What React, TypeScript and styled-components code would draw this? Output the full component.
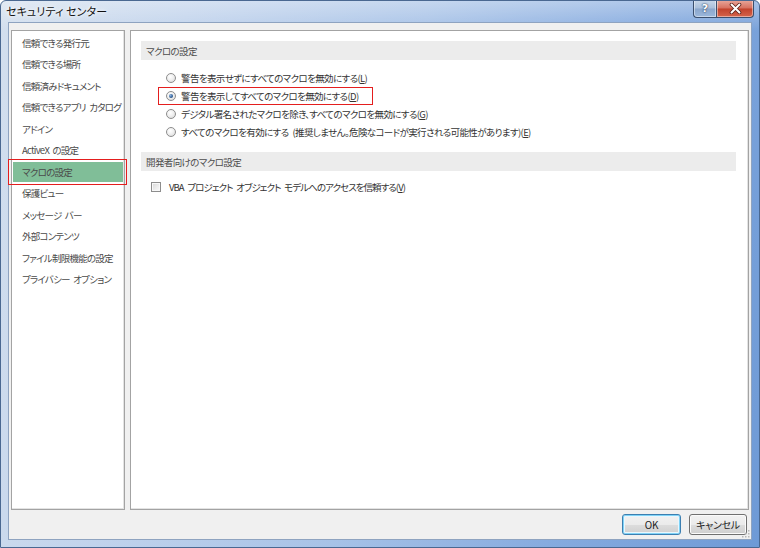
import React from "react";
import styled, { createGlobalStyle, css } from "styled-components";

const GlobalStyle = createGlobalStyle`
  html, body { margin: 0; padding: 0; overflow: hidden; background: #ffffff; }
  body {
    font-family: "Noto Sans CJK JP", "Noto Sans", sans-serif;
    font-feature-settings: "palt";
  }
  * { box-sizing: border-box; }
`;

const Window = styled.div`
  width: 760px;
  height: 548px;
  display: flex;
  flex-direction: column;
  background:
    linear-gradient(180deg, rgba(255,255,255,0.35) 0px, rgba(255,255,255,0) 30px),
    linear-gradient(100deg, #d3dfee 0%, #c1d3ec 22%, #a7c2e7 50%, #86abdf 75%, #6e9ad6 100%);
  border: 1px solid #4a6891;
  border-radius: 6px 6px 0 0;
  overflow: hidden;
`;

const TitleBar = styled.div`
  height: 21px;
  flex: none;
  display: flex;
  align-items: flex-start;
  padding: 0 5px 0 5px;
`;

const Title = styled.div`
  padding-top: 3px;
  font-size: 11px;
  line-height: 14px;
  color: #111;
  text-shadow: 0 0 6px #fff, 0 0 3px #fff;
  letter-spacing: 0.1px;
`;

const CaptionButtons = styled.div`
  margin-left: auto;
  display: flex;
  margin-top: -1px;
`;

const captionBase = css`
  height: 18px;
  display: flex;
  align-items: center;
  justify-content: center;
  border: 1px solid #3b4f6d;
  border-top: none;
  box-shadow: inset 0 0 0 1px rgba(255,255,255,0.45);
`;

const HelpButton = styled.div`
  ${captionBase};
  width: 23px;
  border-radius: 0 0 0 4px;
  border-right: none;
  background: linear-gradient(180deg, #c9d8ea 0%, #a9bfdb 48%, #8aa6cc 52%, #9cb8dc 100%);
  color: #fff;
  font-family: "DejaVu Sans", sans-serif;
  font-weight: bold;
  font-size: 11px;
  text-shadow: 0 0 2px #2c3f5c, 0 0 1px #2c3f5c;
`;

const CloseButton = styled.div`
  ${captionBase};
  width: 38px;
  border-radius: 0 0 4px 0;
  background: linear-gradient(180deg, #e9a99d 0%, #d7705f 48%, #c2422c 52%, #d4644b 100%);
`;

const Client = styled.div`
  flex: 1;
  margin: 0 7px 7px 7px;
  position: relative;
  background: #f0f0f0;
  border: 1px solid #8ea3c0;
  display: grid;
  grid-template-rows: 480px auto;
  padding: 7px 2px 0 2px;
`;

const Panels = styled.div`
  display: grid;
  grid-template-columns: 114px 1fr;
  column-gap: 5px;
`;

const Panel = styled.div`
  background: #fff;
  border: 1px solid #a3a3a3;
  box-shadow: inset -1px -1px 0 #e3e3e3;
  position: relative;
`;

const NavList = styled.div`
  display: flex;
  flex-direction: column;
  padding-top: 1.75px;
`;

const NavItem = styled.div<{ $selected?: boolean }>`
  position: relative;
  height: 20px;
  margin: 0 1px 1.5px 1px;
  padding-left: 9px;
  display: flex;
  align-items: center;
  font-size: 9.5px;
  letter-spacing: -0.75px;
  word-spacing: 2px;
  color: #4a4a4a;
  white-space: pre;
  background: ${(p) => (p.$selected ? "#80be98" : "transparent")};
`;

const Annotation = styled.div`
  position: absolute;
  border: 1px solid #e41e1e;
  pointer-events: none;
`;

const NavMark = styled(Annotation)`
  left: -5px;
  right: -4px;
  top: -3px;
  bottom: -3px;
`;

const OptionMark = styled(Annotation)`
  left: -8px;
  width: 215px;
  top: 0;
  bottom: 0;
`;

const SectionHeader = styled.div<{ $top: number }>`
  margin: ${(p) => p.$top}px 12px 0 10px;
  height: 19px;
  background: #ececec;
  display: flex;
  align-items: center;
  padding-left: 5px;
  font-size: 9.5px;
  letter-spacing: -0.6px;
  color: #4d4d4d;
`;

const OptionList = styled.div`
  margin-top: 9px;
  padding-left: 35px;
  display: flex;
  flex-direction: column;
`;

const OptionRow = styled.label<{ $tight?: boolean }>`
  position: relative;
  height: 18px;
  display: flex;
  align-items: center;
  font-size: 9.5px;
  letter-spacing: ${(p) => (p.$tight ? "-0.95px" : "-0.62px")};
  word-spacing: 2.5px;
  color: #333;
  white-space: pre;
`;

const Radio = styled.span<{ $checked?: boolean }>`
  width: 10px;
  height: 10px;
  flex: none;
  border-radius: 50%;
  border: 1px solid #8d8d8d;
  background: radial-gradient(circle at 40% 35%, #ffffff 0%, #f0f0f0 45%, #d4d4d4 100%);
  margin-right: 5px;
  display: flex;
  align-items: center;
  justify-content: center;
  &::after {
    content: "";
    display: ${(p) => (p.$checked ? "block" : "none")};
    width: 4px;
    height: 4px;
    border-radius: 50%;
    background: radial-gradient(circle at 35% 35%, #8fb6e0 0%, #2f5d95 60%, #1b3c66 100%);
  }
`;

const CheckRow = styled(OptionRow)`
  margin-top: 7px;
  padding-left: 20px;
`;

const CheckBox = styled.span`
  width: 10px;
  height: 10px;
  flex: none;
  border: 1px solid #8d8d8d;
  background: linear-gradient(135deg, #d6d6d6 0%, #eeeeee 60%, #fafafa 100%);
  box-shadow: inset 0 0 0 1px #f8f8f8;
  margin-right: 8px;
`;

const Footer = styled.div`
  display: flex;
  justify-content: flex-end;
  gap: 8px;
  padding: 4px 2px 0 0;
`;

const Button = styled.button<{ $default?: boolean; $w: number }>`
  width: ${(p) => p.$w}px;
  height: 21px;
  padding: 0;
  font-family: "Noto Sans CJK JP", "Noto Sans", sans-serif;
  font-feature-settings: "palt";
  font-size: 10px;
  letter-spacing: -0.3px;
  color: #222;
  border-radius: 3px;
  border: 1px solid ${(p) => (p.$default ? "#3c7fb1" : "#707070")};
  background: linear-gradient(180deg, #f2f2f2 0%, #ebebeb 50%, #dddddd 51%, #cfcfcf 100%);
  box-shadow: ${(p) =>
    p.$default
      ? "inset 0 0 0 1px #7fd3f7, inset 0 0 0 2px #e9f6fd"
      : "inset 0 0 0 1px #fbfbfb"};
`;

const Grip = styled.svg`
  position: absolute;
  right: 1px;
  bottom: 1px;
`;

const navItems = [
  "信頼できる発行元",
  "信頼できる場所",
  "信頼済みドキュメント",
  "信頼できるアプリ カタログ",
  "アドイン",
  "ActiveX の設定",
  "マクロの設定",
  "保護ビュー",
  "メッセージ バー",
  "外部コンテンツ",
  "ファイル制限機能の設定",
  "プライバシー オプション",
];

const options: { text: string; key: string; checked?: boolean; marked?: boolean }[] = [
  { text: "警告を表示せずにすべてのマクロを無効にする", key: "L" },
  { text: "警告を表示してすべてのマクロを無効にする", key: "D", checked: true, marked: true },
  { text: "デジタル署名されたマクロを除き、すべてのマクロを無効にする", key: "G" },
  { text: "すべてのマクロを有効にする (推奨しません。危険なコードが実行される可能性があります)", key: "E" },
];

export default function App() {
  return (
    <>
      <GlobalStyle />
      <Window>
        <TitleBar>
          <Title>セキュリティ センター</Title>
          <CaptionButtons>
            <HelpButton>?</HelpButton>
            <CloseButton>
              <svg width="13" height="11" viewBox="0 0 13 11">
                <path d="M2.5 1.5 L10.5 9.5 M10.5 1.5 L2.5 9.5" stroke="#5a2118" strokeWidth="3.6" strokeLinecap="round" />
                <path d="M2.5 1.5 L10.5 9.5 M10.5 1.5 L2.5 9.5" stroke="#ffffff" strokeWidth="2" strokeLinecap="round" />
              </svg>
            </CloseButton>
          </CaptionButtons>
        </TitleBar>
        <Client>
          <Panels>
            <Panel>
              <NavList>
                {navItems.map((t) => (
                  <NavItem key={t} $selected={t === "マクロの設定"}>
                    {t}
                    {t === "マクロの設定" && <NavMark />}
                  </NavItem>
                ))}
              </NavList>
            </Panel>
            <Panel>
              <SectionHeader $top={10}>マクロの設定</SectionHeader>
              <OptionList>
                {options.map((o) => (
                  <OptionRow key={o.key}>
                    <Radio $checked={o.checked} />
                    <span>
                      {o.text}(<u>{o.key}</u>)
                    </span>
                    {o.marked && <OptionMark />}
                  </OptionRow>
                ))}
              </OptionList>
              <SectionHeader $top={11}>開発者向けのマクロ設定</SectionHeader>
              <CheckRow $tight>
                <CheckBox />
                <span>
                  VBA プロジェクト オブジェクト モデルへのアクセスを信頼する(<u>V</u>)
                </span>
              </CheckRow>
            </Panel>
          </Panels>
          <Footer>
            <Button $default $w={59}>OK</Button>
            <Button $w={58}>キャンセル</Button>
          </Footer>
          <Grip width="10" height="10" viewBox="0 0 10 10">
            {[
              [8, 2], [8, 5], [8, 8], [5, 5], [5, 8], [2, 8],
            ].map(([x, y]) => (
              <rect key={`${x}-${y}`} x={x} y={y} width="1.5" height="1.5" fill="#b8b8b8" />
            ))}
          </Grip>
        </Client>
      </Window>
    </>
  );
}
